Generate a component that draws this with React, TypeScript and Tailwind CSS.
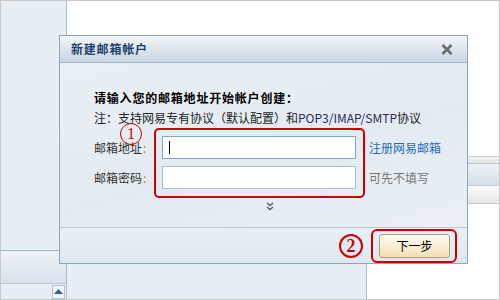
const font = { fontFamily: '"Noto Sans CJK SC", "Noto Sans", sans-serif' };

function Circled({ n, size, thick }: { n: string; size: string; thick?: boolean }) {
  return (
    <span
      className={`flex items-center justify-center rounded-full text-[#cc0000] ${size} ${
        thick ? 'border-[2.5px] border-[#cc0000] font-bold text-[18px]' : 'border-[1.5px] border-[#cc0000] text-[16px]'
      }`}
      style={{ fontFamily: '"Liberation Serif", serif' }}
    >
      <span className="leading-none">{n}</span>
    </span>
  );
}

function Label({ text }: { text: string }) {
  return (
    <div className="h-[23px] flex items-center text-[12px] leading-[12px] text-[#333]">
      {text}
      <span className="text-[#b07a30] ml-[1px]">:</span>
    </div>
  );
}

export default function App() {
  return (
    <div className="relative w-[500px] h-[300px] border border-[#c8c8c8] flex overflow-hidden bg-white" style={font}>
      {/* left panel */}
      <div className="w-[66px] border-r border-[#a6bcd1] flex flex-col bg-[#e7eef4]">
        <div className="h-[249px]" />
        <div className="h-[33px] border-t border-[#9db4ca] bg-gradient-to-b from-[#eef3f7] to-[#d6e1ea]" />
        <div className="flex-1 border-t border-[#b7c7d6] flex justify-end items-center pr-[1px]">
          <div className="w-[13px] h-[14px] border border-[#b5c3d0] bg-[#f3f6f9] flex items-center justify-center">
            <svg width="9" height="5" viewBox="0 0 9 5">
              <path d="M0 5 L4.5 0 L9 5 Z" fill="#2d5f97" />
            </svg>
          </div>
        </div>
      </div>

      {/* right area */}
      <div className="flex-1 flex flex-col">
        <div className="flex-1 flex">
          <div className="w-[300px]" />
          <div className="flex-1 flex flex-col">
            <div className="h-[155px]" />
            <div className="h-[7px] border-t border-[#c6ccd2] bg-gradient-to-b from-[#f6f6f6] to-[#e3e3e3]" />
            <div className="h-[22px] border-t border-[#b7c6d4] bg-gradient-to-b from-[#edf2f6] to-[#d4dfe9]" />
            <div className="h-[19px] border-y border-[#c2c8ce] bg-gradient-to-b from-[#fcfcfc] to-[#e5e5e5]" />
          </div>
        </div>
        <div className="h-[50px] flex">
          <div className="w-[300px] bg-[#e7eef4] border-r border-[#a6bcd1]" />
          <div className="flex-1" />
        </div>
      </div>

      {/* dialog */}
      <div className="absolute left-[58px] top-[34px] w-[409px] h-[229px] border border-[#8ea4ba] flex flex-col bg-[#e6eef4]">
        <div className="h-[27px] border-b border-[#a3b6c8] bg-gradient-to-b from-[#f3f6f9] to-[#c7d5e2] flex items-center justify-between pl-[11px] pr-[14px]">
          <span className="text-[12px] font-bold text-[#1f3f6b] tracking-[0.8px]">新建邮箱帐户</span>
          <svg width="12" height="11" viewBox="0 0 12 11">
            <path d="M1.5 1 L10.5 10 M10.5 1 L1.5 10" stroke="#6b6b6b" strokeWidth="2.6" />
          </svg>
        </div>

        <div className="h-[164px] pl-[34px] pt-[25px] bg-[linear-gradient(165deg,#e9f0f5_0%,#e3ebf1_55%,#eaf0f5_100%)]">
          <div className="h-[20px] leading-[20px] text-[12px] font-bold text-black tracking-[0.8px]">
            请输入您的邮箱地址开始帐户创建：
          </div>
          <div className="h-[20px] leading-[20px] text-[12px] text-[#222]">
            注：支持网易专有协议（默认配置）和<span className="text-[#2a2a60]">POP3/IMAP/SMTP</span>协议
          </div>

          <div className="relative flex">
            <div className="absolute left-[26px] top-[-5px]">
              <Circled n="1" size="w-[22px] h-[22px]" />
            </div>
            <div className="w-[60px] pt-[8px] flex flex-col gap-[7px]">
              <Label text="邮箱地址" />
              <Label text="邮箱密码" />
            </div>
            <div className="w-[211px] h-[70px] border-2 border-[#cc0000] rounded-[5px] pl-[6px] pt-[6px] flex flex-col gap-[7px]">
              <div className="w-[194px] h-[23px] border border-[#7fa5cd] bg-white flex items-center pl-[6px]">
                <span className="w-[1px] h-[13px] bg-black" />
              </div>
              <div className="w-[194px] h-[23px] border border-[#a8bccf] bg-white" />
            </div>
            <div className="pl-[4px] pt-[8px] flex flex-col gap-[7px] text-[12px]">
              <div className="h-[23px] flex items-center text-[#1e6ab6]">注册网易邮箱</div>
              <div className="h-[23px] flex items-center text-[#777]">可先不填写</div>
            </div>
          </div>

          <div className="pl-[172px] pt-[4px]">
            <svg width="8" height="9" viewBox="0 0 8 9">
              <path d="M1 1 L4 3.5 L7 1 M1 5 L4 7.5 L7 5" stroke="#5a5a5a" strokeWidth="1.4" fill="none" />
            </svg>
          </div>
        </div>

        <div className="flex-1 border-t border-[#b5c6d5] bg-gradient-to-b from-[#eaf0f5] to-[#dde7ee] flex items-center justify-end pr-[10px] gap-[8px]">
          <Circled n="2" size="w-[24px] h-[24px]" thick />
          <div className="w-[86px] h-[34px] border-2 border-[#cc0000] rounded-[6px] flex items-center pl-[6px] pt-[1px]">
            <button className="w-[71px] h-[24px] border border-[#b59e74] rounded-[3px] bg-gradient-to-b from-[#fefbf1] to-[#f3e0b5] text-[12px] text-black" style={font}>
              下一步
            </button>
          </div>
        </div>
      </div>
    </div>
  );
}
